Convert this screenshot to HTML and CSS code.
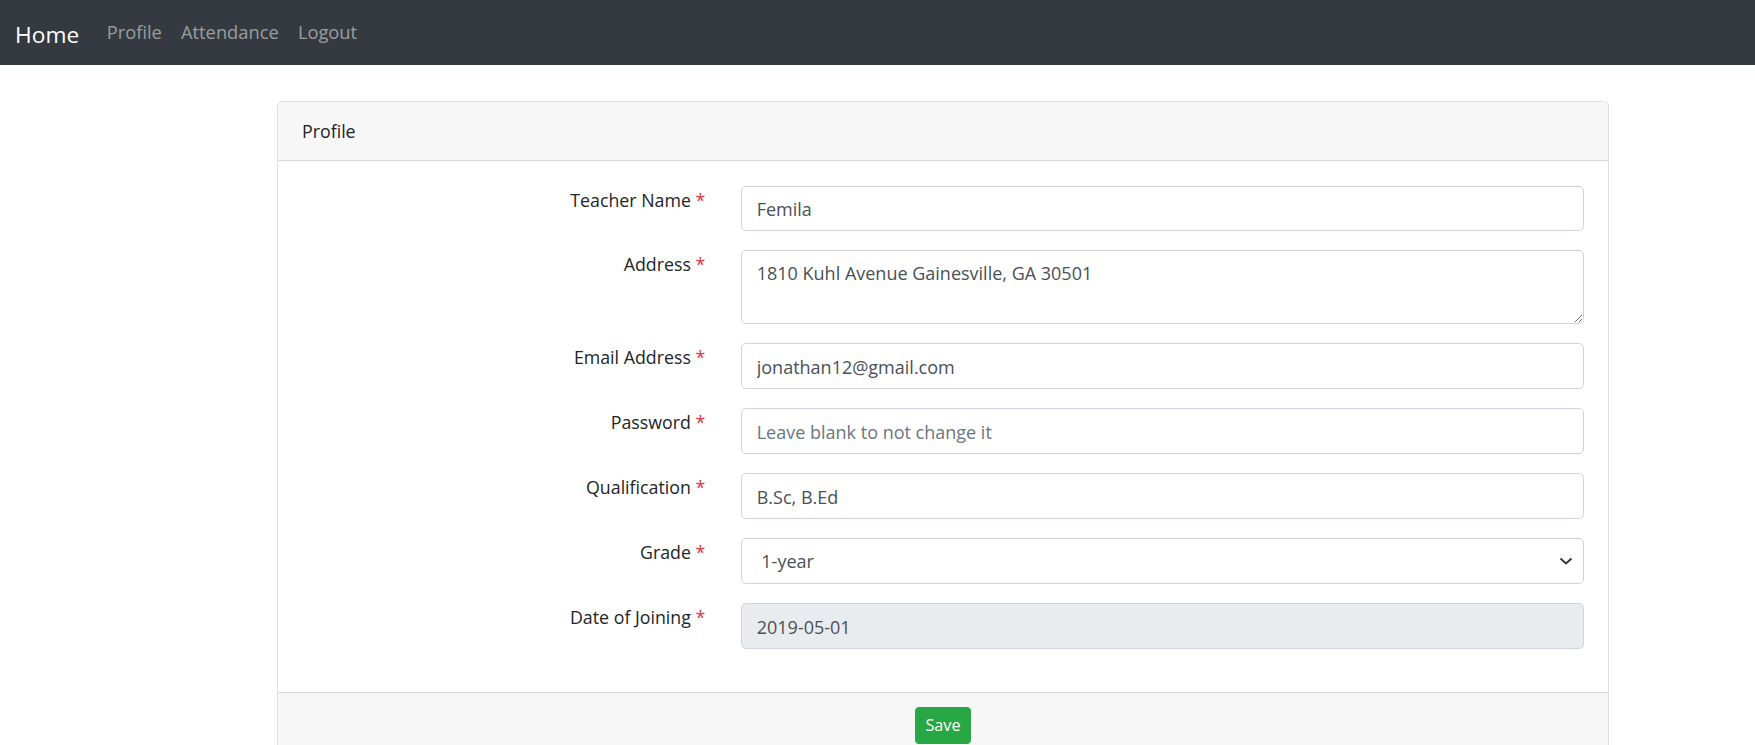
FILE: index.html
```html
<!DOCTYPE html>
<html lang="en">
<head>
<meta charset="utf-8">
<title>Profile</title>
<link rel="stylesheet" href="styles.css">
</head>
<body>
<nav class="navbar">
  <a class="brand" href="#">Home</a>
  <a class="nav-link" href="#">Profile</a>
  <a class="nav-link" href="#">Attendance</a>
  <a class="nav-link" href="#">Logout</a>
</nav>
<main class="page">
  <form class="card">
    <div class="card-header">Profile</div>
    <div class="card-body">
      <div class="form-row">
        <label class="form-label">Teacher Name <span class="req">*</span></label>
        <div class="form-field"><input class="form-control" type="text" value="Femila"></div>
      </div>
      <div class="form-row">
        <label class="form-label">Address <span class="req">*</span></label>
        <div class="form-field"><textarea class="form-control textarea" rows="2">1810 Kuhl Avenue Gainesville, GA 30501</textarea></div>
      </div>
      <div class="form-row">
        <label class="form-label">Email Address <span class="req">*</span></label>
        <div class="form-field"><input class="form-control" type="text" value="jonathan12@gmail.com"></div>
      </div>
      <div class="form-row">
        <label class="form-label">Password <span class="req">*</span></label>
        <div class="form-field"><input class="form-control" type="password" placeholder="Leave blank to not change it"></div>
      </div>
      <div class="form-row">
        <label class="form-label">Qualification <span class="req">*</span></label>
        <div class="form-field"><input class="form-control" type="text" value="B.Sc, B.Ed"></div>
      </div>
      <div class="form-row">
        <label class="form-label">Grade <span class="req">*</span></label>
        <div class="form-field">
          <select class="form-control select">
            <option>1-year</option>
            <option>2-year</option>
          </select>
        </div>
      </div>
      <div class="form-row">
        <label class="form-label">Date of Joining <span class="req">*</span></label>
        <div class="form-field"><input class="form-control" type="text" value="2019-05-01" disabled></div>
      </div>
    </div>
    <div class="card-footer">
      <button class="btn-save" type="button">Save</button>
    </div>
  </form>
</main>
</body>
</html>
```
FILE: styles.css
```css
html, body {
  margin: 0;
  padding: 0;
  overflow: hidden;
}
body {
  font-family: "Open Sans", "Noto Sans", "Liberation Sans", sans-serif;
  font-size: 17.8px;
  line-height: 28.8px;
  color: #212529;
  background: #fff;
}
.navbar {
  display: flex;
  align-items: center;
  height: 65px;
  padding: 0 15px;
  background: #343a40;
  box-sizing: border-box;
}
.brand {
  color: #fff;
  font-size: 22.7px;
  line-height: 36px;
  text-decoration: none;
  margin-right: 18px;
  padding-top: 4px;
}
.nav-link {
  color: rgba(255, 255, 255, 0.5);
  text-decoration: none;
  padding: 0 9.6px;
  font-size: 18.3px;
}
.page {
  padding: 36px 0 0 277px;
}
.card {
  width: 1332px;
  box-sizing: border-box;
  border: 1px solid rgba(0, 0, 0, 0.125);
  border-radius: 4.8px;
  margin: 0;
}
.card-header {
  background: #f7f7f7;
  border-bottom: 1px solid rgba(0, 0, 0, 0.125);
  padding: 15px 24px;
  border-radius: 4.8px 4.8px 0 0;
  height: 59px;
  box-sizing: border-box;
}
.card-body {
  padding: 24.5px 24px 23.5px;
}
.form-row {
  display: flex;
  margin: 0 -18px 19.35px;
}
.form-label {
  flex: 0 0 33.3333%;
  box-sizing: border-box;
  padding: 0 18px;
  text-align: right;
}
.req {
  color: #dc3545;
}
.form-field {
  flex: 0 0 66.6667%;
  box-sizing: border-box;
  padding: 0 18px;
}
.form-control {
  display: block;
  width: 100%;
  box-sizing: border-box;
  height: 45.6px;
  padding: 8px 14.4px 6.4px;
  font-family: inherit;
  font-size: 18px;
  line-height: 28.8px;
  color: #495057;
  background: #fff;
  border: 1px solid #ced4da;
  border-radius: 4.8px;
  margin: 0;
  outline: none;
}
.form-control::placeholder {
  color: #6c757d;
  opacity: 1;
}
.form-control:disabled {
  background: #e9ecef;
  color: #495057;
}
.textarea {
  height: 73.6px;
  resize: vertical;
}
.select {
  appearance: none;
  -webkit-appearance: none;
  padding-left: 19px;
  background: #fff url("data:image/svg+xml,%3Csvg xmlns='http://www.w3.org/2000/svg' width='14' height='8' viewBox='0 0 14 8'%3E%3Cpath d='M1.5 1.5l5.5 5 5.5-5' fill='none' stroke='%23333' stroke-width='1.8'/%3E%3C/svg%3E") no-repeat right 10px center;
}
.card-footer {
  background: #f7f7f7;
  border-top: 1px solid rgba(0, 0, 0, 0.125);
  padding: 14.4px 24px;
  text-align: center;
}
.btn-save {
  height: 37px;
  padding: 0 9px;
  font-family: inherit;
  font-size: 16.3px;
  color: #fff;
  background: #28a745;
  border: 1px solid #28a745;
  border-radius: 3.84px;
}
```
